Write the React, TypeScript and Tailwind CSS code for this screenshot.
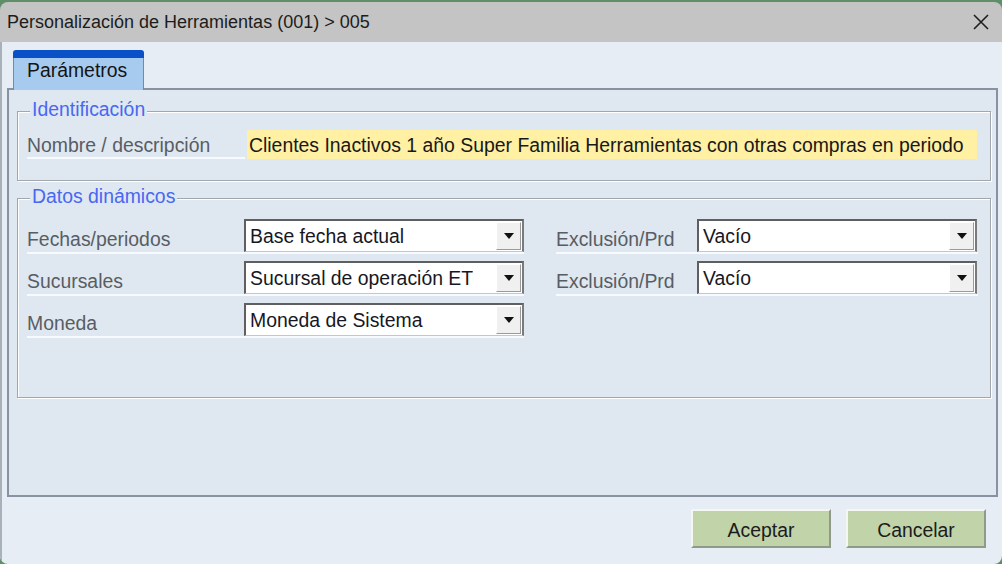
import React from "react";

const rowsLeft = [
  { label: "Fechas/periodos", value: "Base fecha actual" },
  { label: "Sucursales", value: "Sucursal de operación ET" },
  { label: "Moneda", value: "Moneda de Sistema" },
];

const rowsRight = [
  { label: "Exclusión/Prd", value: "Vacío" },
  { label: "Exclusión/Prd", value: "Vacío" },
];

function Combo({ value }: { value: string }) {
  return (
    <div className="flex h-[33px] w-[280px] shrink-0 items-stretch border-2 border-[#5f5f5f] border-b border-r-[#7a7a7a] border-b-[#c6c6c6] bg-white">
      <div className="flex flex-1 items-center pl-[4px] text-[19.4px] leading-[20px] text-[#17171f]">
        {value}
      </div>
      <div className="my-[1px] mr-[1px] flex w-[25px] items-center justify-center border border-[#ffffff] border-r-[#9a9a9a] border-b-[#9a9a9a] bg-[#f0f0f0]">
        <svg width="10" height="6" viewBox="0 0 10 6">
          <path d="M0 0 L10 0 L5 6 Z" fill="#111" />
        </svg>
      </div>
    </div>
  );
}

function FieldRow({ label, value, labelW }: { label: string; value: string; labelW: string }) {
  return (
    <div className="flex items-end border-b-2 border-[#f7faff]">
      <div className={`${labelW} shrink-0 pb-[3px] text-[19.4px] leading-[20px] text-[#585d64]`}>
        {label}
      </div>
      <Combo value={value} />
    </div>
  );
}

function Group({ title, className, children }: { title: string; className?: string; children: React.ReactNode }) {
  return (
    <div
      className={`flex flex-col border border-[#a2a7ad] shadow-[inset_1px_1px_0_#ffffff,1px_1px_0_#ffffff] ${className ?? ""}`}
    >
      <div className="-mt-[13px] ml-[12px] w-fit bg-[#dfe7f0] px-[2px] text-[19.4px] leading-[20px] text-[#4868f2]">
        {title}
      </div>
      {children}
    </div>
  );
}

export default function App() {
  return (
    <div className="h-[564px] w-[1002px] overflow-hidden bg-[#5f8f68] pt-[2px] font-['Liberation_Sans',Arial,sans-serif]">
      <div className="flex h-[562px] flex-col overflow-hidden rounded-[8px]">
        {/* Title bar */}
        <div className="flex h-[40px] shrink-0 items-center justify-between bg-[#c4c4c4] pl-[7px] pr-[12px]">
          <span className="text-[18px] leading-[20px] text-[#1c1c1c]">
            Personalización de Herramientas (001) &gt; 005
          </span>
          <svg width="18" height="18" viewBox="0 0 18 18" className="mb-[1px]">
            <path d="M2 2 L16 16 M16 2 L2 16" stroke="#1f1f1f" strokeWidth="1.6" />
          </svg>
        </div>

        {/* Body */}
        <div className="flex flex-1 flex-col border-l-2 border-[#a8b0b8] bg-[#e6edf5] pl-[5px] pr-[4px] pt-[8px]">
          {/* Tab */}
          <div className="relative z-10 -mb-[2px] ml-[6px] flex h-[40px] w-[131px] flex-col">
            <div className="h-[8px] rounded-t-[3px] bg-[#0a50c6]" />
            <div className="flex-1 border-x border-[#7d8894] bg-[#a7cbee] pl-[13px] pt-[2px] text-[19.4px] leading-[20px] text-[#141414]">
              Parámetros
            </div>
          </div>

          {/* Tab panel */}
          <div className="flex h-[409px] flex-col border-2 border-[#8892a0] bg-[#dfe7f0] pl-[8px] pr-[5px] pt-[21px]">
            <Group title="Identificación" className="pb-[21px]">
              <div className="mt-[11px] flex items-end">
                <div className="ml-[9px] flex h-[28px] w-[218px] items-center border-b-2 border-[#f7faff] text-[19.4px] leading-[20px] text-[#585d64]">
                  <span className="pt-[2px]">Nombre / descripción</span>
                </div>
                <div className="ml-[2px] flex h-[29px] w-[730px] items-center bg-[#fff0a3] pl-[2px] text-[19.4px] leading-[20px] text-[#181818]">
                  Clientes Inactivos 1 año Super Familia Herramientas con otras compras en periodo
                </div>
              </div>
            </Group>

            <Group title="Datos dinámicos" className="mt-[17px] h-[200px]">
              <div className="ml-[9px] mt-[13px] flex items-start">
                <div className="flex w-[497px] flex-col gap-[7px]">
                  {rowsLeft.map((r, i) => (
                    <FieldRow key={i} label={r.label} value={r.value} labelW="w-[217px]" />
                  ))}
                </div>
                <div className="ml-[32px] flex w-[422px] flex-col gap-[7px]">
                  {rowsRight.map((r, i) => (
                    <FieldRow key={i} label={r.label} value={r.value} labelW="w-[141px]" />
                  ))}
                </div>
              </div>
            </Group>
          </div>

          {/* Footer buttons */}
          <div className="flex justify-end gap-[15px] pr-[12px] pt-[12px]">
            {["Aceptar", "Cancelar"].map((b) => (
              <button
                key={b}
                className="flex h-[39px] w-[140px] items-center justify-center border-2 border-[#f4f7f0] border-b-[#8f9a88] border-r-[#8f9a88] bg-[#c1d3a9] pt-[2px] text-[19.4px] leading-[20px] text-[#1c1c1c]"
              >
                {b}
              </button>
            ))}
          </div>
        </div>
      </div>
    </div>
  );
}
